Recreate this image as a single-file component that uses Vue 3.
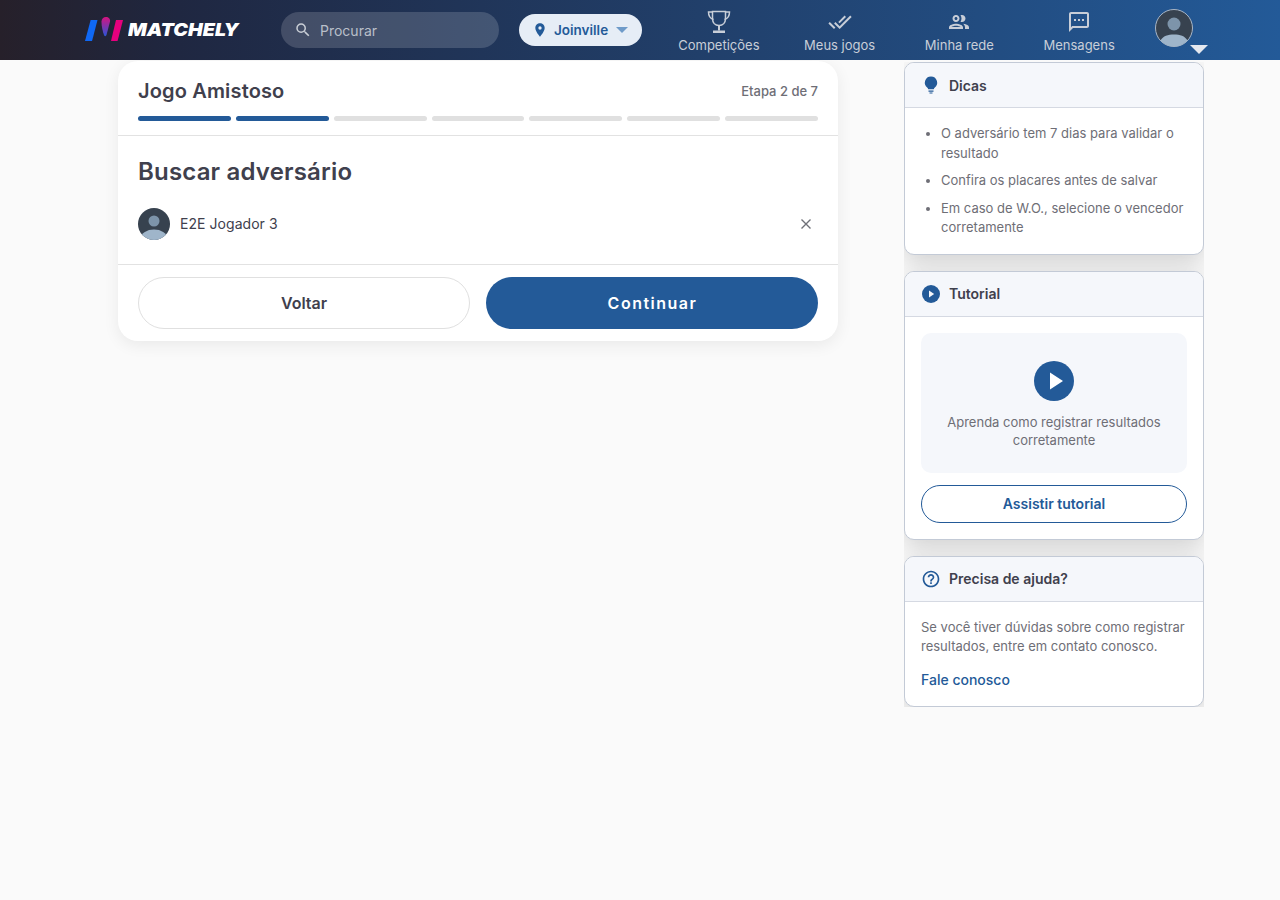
<script setup>
const steps = [1, 1, 0, 0, 0, 0, 0]
const tips = [
  'O adversário tem 7 dias para validar o resultado',
  'Confira os placares antes de salvar',
  'Em caso de W.O., selecione o vencedor corretamente'
]
</script>

<template>
  <div class="page">
    <header class="topbar">
      <div class="logo">
        <svg class="logo-mark" width="38" height="24" viewBox="0 0 38 24">
          <defs>
            <linearGradient id="dropGrad" x1="0" y1="0" x2="0" y2="1">
              <stop offset="0" stop-color="#d6127f" />
              <stop offset="1" stop-color="#2a55d8" />
            </linearGradient>
          </defs>
          <path d="M5.500 3.500q.2-.5.7-.5H12.500L7.200 23.500q-.2.5-.7.5H0z" fill="#0f68f5" />
          <path d="M16.500 4.500C16.500 2 18.500 0 21 0s4.500 2 4 4.500l-3.500 13.500c-.4 1.500-1.800 1.500-2.400.2-1.300-3.200-2.600-8.500-2.600-13.700z" fill="url(#dropGrad)" />
          <path d="M31 3h7l-5.300 20.500q-.2.500-.7.500H26z" fill="#e6007e" />
        </svg>
        <span class="logo-text">MATCHELY</span>
      </div>

      <div class="search">
        <svg width="18" height="18" viewBox="0 0 24 24" fill="#c9ced6"><path d="M15.500 14h-.79l-.28-.27A6.470 6.470 0 0 0 16 9.500 6.500 6.500 0 1 0 9.500 16c1.610 0 3.090-.59 4.230-1.570l.27.28v.79l5 4.990L20.490 19l-4.990-5zm-6 0C7.010 14 5 11.990 5 9.500S7.010 5 9.500 5 14 7.010 14 9.500 11.990 14 9.500 14z"/></svg>
        <span>Procurar</span>
      </div>

      <div class="city">
        <svg width="16" height="16" viewBox="0 0 24 24" fill="#235a98"><path d="M12 2C8.130 2 5 5.130 5 9c0 5.250 7 13 7 13s7-7.750 7-13c0-3.870-3.130-7-7-7zm0 9.500a2.500 2.500 0 1 1 0-5 2.500 2.500 0 0 1 0 5z"/></svg>
        <span>Joinville</span>
        <i class="city-caret"></i>
      </div>

      <nav class="nav">
        <div class="nav-item">
          <svg width="24" height="24" viewBox="0 0 24 24" fill="none" stroke="#c8ced8" stroke-width="1.500"><path d="M5.500 1.500h13v7c0 4-2.500 7-6.500 7s-6.500-3-6.500-7z"/><path d="M5.500 2H1.500c0 4 1.500 6.500 5 7.500M18.500 2h4c0 4-1.500 6.500-5 7.500"/><path d="M12 15.500v5" stroke-width="2"/><path d="M6 20.500h12v2.500H6z" fill="#c8ced8" stroke="none"/></svg>
          <span>Competições</span>
        </div>
        <div class="nav-item">
          <svg width="24" height="24" viewBox="0 0 24 24" fill="#c8ced8"><path d="M18 7l-1.410-1.410-6.340 6.340 1.410 1.410L18 7zm4.240-1.410L11.660 16.170 7.480 12l-1.410 1.410L11.660 19l12-12-1.420-1.410zM.41 13.410L6 19l1.410-1.410L1.830 12 .41 13.410z"/></svg>
          <span>Meus jogos</span>
        </div>
        <div class="nav-item">
          <svg width="24" height="24" viewBox="0 0 24 24" fill="#c8ced8"><path d="M9 13.750c-2.340 0-7 1.170-7 3.500V19h14v-1.750c0-2.330-4.660-3.500-7-3.500zM4.340 17c.84-.58 2.870-1.250 4.660-1.250s3.820.67 4.660 1.250H4.340zM9 12c1.930 0 3.500-1.570 3.500-3.500S10.930 5 9 5 5.500 6.570 5.500 8.500 7.070 12 9 12zm0-5c.83 0 1.500.67 1.500 1.500S9.830 10 9 10s-1.500-.67-1.500-1.500S8.170 7 9 7zm7.040 6.810c1.160.84 1.960 1.960 1.960 3.440V19h4v-1.750c0-2.020-3.500-3.170-5.960-3.440zM15 12c1.930 0 3.500-1.570 3.500-3.500S16.930 5 15 5c-.54 0-1.040.13-1.500.35.630.89 1 1.980 1 3.150s-.37 2.260-1 3.150c.46.220.96.350 1.500.350z"/></svg>
          <span>Minha rede</span>
        </div>
        <div class="nav-item">
          <svg width="24" height="24" viewBox="0 0 24 24" fill="#c8ced8"><path d="M20 2H4c-1.100 0-2 .9-2 2v18l4-4h14c1.100 0 2-.9 2-2V4c0-1.100-.9-2-2-2zm0 14H5.170L4 17.170V4h16v12zM7 9h2v2H7zm4 0h2v2h-2zm4 0h2v2h-2z"/></svg>
          <span>Mensagens</span>
        </div>
      </nav>

      <div class="me">
        <svg class="me-avatar" width="38" height="38" viewBox="0 0 38 38">
          <circle cx="19" cy="19" r="18.500" fill="#37424f" stroke="#a9b6c6" />
          <circle cx="19" cy="15" r="6.500" fill="#7d94aa" />
          <path d="M5.500 31.500C8 27 13 25.500 19 25.500s11 1.500 13.500 6A18 18 0 0 1 19 37.500 18 18 0 0 1 5.500 31.500z" fill="#9fb5ca" />
        </svg>
        <i class="me-caret"></i>
      </div>
    </header>

    <main class="content">
      <section class="wizard">
        <div class="wizard-head">
          <div class="wizard-title">
            <h1>Jogo Amistoso</h1>
            <span>Etapa 2 de 7</span>
          </div>
          <div class="steps">
            <i v-for="(s, n) in steps" :key="n" :class="{ on: s }"></i>
          </div>
        </div>
        <div class="wizard-body">
          <h2>Buscar adversário</h2>
          <div class="player">
            <svg width="32" height="32" viewBox="0 0 32 32">
              <clipPath id="pc"><circle cx="16" cy="16" r="16" /></clipPath>
              <g clip-path="url(#pc)">
                <rect width="32" height="32" fill="#37424f" />
                <circle cx="16" cy="13" r="5.500" fill="#7d94aa" />
                <ellipse cx="16" cy="30" rx="13" ry="8.500" fill="#9fb5ca" />
              </g>
            </svg>
            <span class="player-name">E2E Jogador 3</span>
            <svg class="player-x" width="16" height="16" viewBox="0 0 16 16" stroke="#6f7078" stroke-width="1.400"><path d="M3.500 3.500l9 9M12.500 3.500l-9 9" /></svg>
          </div>
        </div>
        <div class="wizard-foot">
          <button class="btn ghost">Voltar</button>
          <button class="btn solid">Continuar</button>
        </div>
      </section>

      <aside class="side">
        <div class="box">
          <div class="box-head">
            <svg width="20" height="20" viewBox="0 0 20 20" fill="#235a98"><path d="M10 1.500a6.200 6.200 0 0 0-3.600 11.200c.5.400.8.900.8 1.500h5.600c0-.6.300-1.100.8-1.500A6.200 6.200 0 0 0 10 1.500z"/><path d="M7.500 15.500h5v1.300h-5zM8.500 17.600h3v.9h-3z"/></svg>
            <h3>Dicas</h3>
          </div>
          <ul class="tips">
            <li v-for="t in tips" :key="t">{{ t }}</li>
          </ul>
        </div>

        <div class="box">
          <div class="box-head">
            <svg width="20" height="20" viewBox="0 0 20 20"><circle cx="10" cy="10" r="9" fill="#235a98"/><path d="M8 6.500l5.200 3.500L8 13.500z" fill="#f5f7fb"/></svg>
            <h3>Tutorial</h3>
          </div>
          <div class="box-body">
            <div class="video">
              <svg width="40" height="40" viewBox="0 0 40 40"><circle cx="20" cy="20" r="20" fill="#235a98"/><path d="M16 11.500L29 20l-13 8.500z" fill="#fff"/></svg>
              <p>Aprenda como registrar resultados corretamente</p>
            </div>
            <button class="watch">Assistir tutorial</button>
          </div>
        </div>

        <div class="box">
          <div class="box-head">
            <svg width="20" height="20" viewBox="0 0 24 24" fill="#235a98"><path d="M11 18h2v-2h-2v2zm1-16C6.480 2 2 6.480 2 12s4.480 10 10 10 10-4.480 10-10S17.520 2 12 2zm0 18c-4.410 0-8-3.590-8-8s3.590-8 8-8 8 3.590 8 8-3.590 8-8 8zm0-14c-2.210 0-4 1.790-4 4h2c0-1.100.9-2 2-2s2 .9 2 2c0 2-3 1.750-3 5h2c0-2.250 3-2.500 3-5 0-2.210-1.790-4-4-4z"/></svg>
            <h3>Precisa de ajuda?</h3>
          </div>
          <div class="box-body help">
            <p>Se você tiver dúvidas sobre como registrar resultados, entre em contato conosco.</p>
            <a>Fale conosco</a>
          </div>
        </div>
      </aside>
    </main>
  </div>
</template>

<style>
html, body { margin: 0; background: #fafafa; }
</style>

<style scoped>
.page { min-height: 900px; background: #fafafa; font-family: Inter, "Liberation Sans", sans-serif; color: #40404d; }
.topbar { position: relative; z-index: 2; height: 60px; display: flex; align-items: center; padding-left: 85px; background: linear-gradient(90deg, #26202a 0, #1f2741 14%, #235a98 100%); box-sizing: border-box; }
.logo { display: flex; align-items: center; width: 196px; gap: 5px; }
.logo-mark { display: block; margin-top: -2px; flex: none; }
.logo-text { font-size: 18px; font-weight: 900; font-style: italic; color: #fff; line-height: 20px; transform: scaleX(1.09); transform-origin: left center; }
.search { width: 218px; height: 36px; box-sizing: border-box; border-radius: 18px; background: rgba(255, 255, 255, .16); display: flex; align-items: center; gap: 8px; padding-left: 13px; font-size: 14px; color: #b9bfc9; }
.city { margin-left: 20px; width: 123px; height: 32px; box-sizing: border-box; border-radius: 16px; background: #e6edf6; display: flex; align-items: center; padding-left: 13px; gap: 6px; font-size: 13.500px; font-weight: 600; color: #235a98; }
.city-caret { width: 0; height: 0; margin-left: 2px; border: 6px solid transparent; border-top: 6px solid #6f9bc9; border-bottom: 0; }
.nav { display: flex; margin-left: 17px; width: 480px; align-self: flex-start; }
.nav-item { width: 120px; display: flex; flex-direction: column; align-items: center; gap: 3px; font-size: 13px; color: #c8ced8; padding-top: 10px; }
.nav-item:first-child { margin-right: 1px; }
.nav-item svg { display: block; }
.nav-item span { line-height: 16px; white-space: nowrap; }
.me { position: relative; margin-left: 16px; width: 38px; height: 38px; top: -2px; }
.me-avatar { display: block; }
.me-caret { position: absolute; left: 35px; top: 36px; width: 0; height: 0; border: 9px solid transparent; border-top: 9px solid #e4e8ef; border-bottom: 0; }

.content { display: flex; align-items: flex-start; gap: 66px; padding: 1px 0 0 118px; }
.wizard { width: 720px; background: #fff; border-radius: 20px; box-shadow: 0 4px 16px rgba(0, 0, 0, .07); }
.wizard-head { padding: 18px 20px 14px; border-bottom: 1px solid #e2e2e2; }
.wizard-title { display: flex; justify-content: space-between; align-items: center; }
h1 { margin: 0; font-size: 20px; line-height: 24px; font-weight: 600; letter-spacing: .15px; }
.wizard-title span { font-size: 13px; font-weight: 500; color: #6e6e76; }
.steps { display: flex; gap: 5px; margin-top: 13px; }
.steps i { flex: 1; height: 5px; border-radius: 3px; background: #e0e0e0; }
.steps i.on { background: #235a98; }
.wizard-body { padding: 21px 20px 24px; border-bottom: 1px solid #e2e2e2; }
h2 { margin: 0; font-size: 24px; line-height: 30px; font-weight: 600; letter-spacing: .18px; }
.player { display: flex; align-items: center; margin-top: 21px; height: 32px; }
.player svg { display: block; }
.player-name { margin-left: 10px; padding-bottom: 1px; font-size: 14px; flex: 1; letter-spacing: .05px; }
.player-x { margin-right: 4px; }
.wizard-foot { display: grid; grid-template-columns: 332px 332px; gap: 16px; padding: 12px 20px; }
.btn { height: 52px; border-radius: 26px; font-family: inherit; font-size: 16px; font-weight: 600; box-sizing: border-box; }
.ghost { background: #fff; border: 1px solid #e0e0e0; color: #40404d; }
.solid { background: #235a98; border: 0; color: #fff; letter-spacing: 1.500px; padding-left: 7px; }

.side { width: 300px; margin-top: 1px; display: flex; flex-direction: column; gap: 16px; overflow: hidden; }
.box { background: #fff; border: 1px solid #c3cad6; border-radius: 10px; box-shadow: 0 8px 24px rgba(0, 0, 0, .16); overflow: hidden; flex: none; }
.box-head { height: 44px; display: flex; align-items: center; gap: 8px; padding-left: 16px; background: #f5f7fb; border-bottom: 1px solid #d5d9e2; }
.box-head svg { display: block; flex: none; }
h3 { margin: 0; font-size: 14px; font-weight: 600; }
.tips { margin: 0; padding: 16px 16px 16px 36px; font-size: 13px; line-height: 19.500px; color: #6e6e76; }
.tips li + li { margin-top: 8px; }
.box-body { padding: 16px; }
.video { height: 140px; box-sizing: border-box; padding: 28px 16px 0; border-radius: 10px; background: #f5f7fb; text-align: center; }
.video svg { display: block; margin: 0 auto; }
.video p { margin: 12px 0 0; font-size: 13px; line-height: 18px; color: #6e6e76; }
.watch { display: block; width: 100%; height: 38px; margin-top: 12px; background: #fff; border: 1px solid #235a98; border-radius: 19px; color: #235a98; font-family: inherit; font-size: 14px; font-weight: 600; }
.help { padding-top: 16px; padding-bottom: 17px; font-size: 13px; line-height: 19.500px; color: #6e6e76; }
.help p { margin: 0; }
.help a { display: block; margin-top: 13px; font-size: 14px; font-weight: 500; color: #235a98; }
</style>
